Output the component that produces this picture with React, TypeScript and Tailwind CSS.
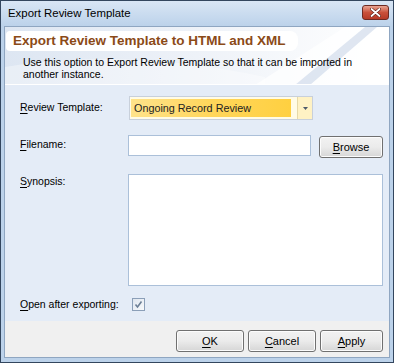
import React from "react";

const font = { fontFamily: '"Liberation Sans", Tahoma, sans-serif' };

function Btn({ label, u, w }: { label: string; u: string; w: string }) {
  const rest = label.slice(u.length);
  return (
    <div
      className={`${w} h-[22px] flex items-center justify-center rounded-[3px] border border-[#707070] text-[11px] text-black bg-gradient-to-b from-[#f2f2f2] via-[#ebebeb] to-[#d6d6d6] shadow-[inset_0_0_0_1px_#fcfcfc]`}
    >
      <span>
        <span className="underline underline-offset-2">{u}</span>
        {rest}
      </span>
    </div>
  );
}

export default function App() {
  return (
    <div
      className="w-[394px] h-[363px] bg-[#bcd2ea] border border-[#33465e] flex flex-col overflow-hidden"
      style={font}
    >
      {/* Title bar */}
      <div className="h-[25px] flex items-center justify-between pl-[7px] pr-[4px] bg-gradient-to-b from-[#d9e6f5] to-[#bcd2ea]">
        <span className="text-[11.4px] text-black">Export Review Template</span>
        <div className="w-[27px] h-[15px] mb-[3px] rounded-[3px] border border-[#6d2a22] bg-gradient-to-b from-[#e8a493] via-[#c9503a] to-[#b63a26] flex items-center justify-center">
          <svg width="11" height="9" viewBox="0 0 11 9">
            <path d="M1.5 1 L9.5 8 M9.5 1 L1.5 8" stroke="#5a1a12" strokeWidth="3" strokeLinecap="round" />
            <path d="M1.5 1 L9.5 8 M9.5 1 L1.5 8" stroke="#ffffff" strokeWidth="1.8" strokeLinecap="round" />
          </svg>
        </div>
      </div>

      {/* Client area */}
      <div className="flex-1 mx-[3px] mb-[4px] border border-[#8fa6c1] flex flex-col bg-[#e4ecf7]">
        {/* Header band */}
        <div className="relative h-[58px] bg-gradient-to-r from-[#dde6f2] via-[#eef2f8] to-[#ffffff] overflow-hidden border-b border-[#ffffff]">
          <svg className="absolute inset-0" width="386" height="58" viewBox="0 0 386 58">
            <path d="M250 58 L340 0 L386 0 L386 58 Z" fill="#ffffff" opacity="0.7" />
            <path d="M290 58 L360 0 L372 0 L305 58 Z" fill="#c9d6e8" opacity="0.6" />
            <path d="M0 40 Q120 20 260 50 L260 58 L0 58 Z" fill="#ffffff" opacity="0.35" />
          </svg>
          <div className="relative pt-[1px] pl-[1px]">
            <div className="inline-block bg-white rounded-r-[8px] rounded-l-[4px] pl-[7px] pr-[12px] h-[20px] leading-[20px] text-[13.5px] font-bold text-[#8b4a17]">
              Export Review Template to HTML and XML
            </div>
            <div className="pl-[17px] pr-[20px] mt-[4px] text-[10.5px] leading-[12px] text-black">
              Use this option to Export Review Template so that it can be imported in another instance.
            </div>
          </div>
        </div>

        {/* Form */}
        <div className="flex-1 flex flex-col pl-[15px] pr-[6px] text-[10.5px] text-black">
          <div className="flex items-center mt-[11px] h-[24px]">
            <span className="w-[109px]">
              <span className="underline underline-offset-2">R</span>eview Template:
            </span>
            <div className="w-[184px] h-[24px] flex border border-[#c8d0db] bg-[#fffbe6]">
              <div className="flex-1 flex items-center pl-[1px]">
                <div className="h-[18px] w-[160px] flex items-center pl-[3px] bg-gradient-to-r from-[#ffe38a] via-[#ffd65a] to-[#ffd040] text-[#222] text-[10.8px]">
                  Ongoing Record Review
                </div>
              </div>
              <div className="w-[15px] border-l border-[#e6d9a8] bg-[#fff2c4] flex items-center justify-center">
                <svg width="5" height="3" viewBox="0 0 5 3">
                  <path d="M0 0 L5 0 L2.5 3 Z" fill="#4d5a6b" />
                </svg>
              </div>
            </div>
          </div>

          <div className="flex items-center mt-[15px] h-[22px]">
            <span className="w-[109px] self-start pt-[2px]">
              <span className="underline underline-offset-2">F</span>ilename:
            </span>
            <div className="w-[184px] h-[21px] self-start border border-[#abc0d9] bg-white" />
            <div className="ml-[8px] mt-[2px]">
              <Btn label="Browse" u="B" w="w-[64px]" />
            </div>
          </div>

          <div className="flex mt-[17px]">
            <span className="w-[109px] pt-[0px]">
              <span className="underline underline-offset-2">S</span>ynopsis:
            </span>
            <div className="w-[257px] h-[112px] border border-[#abc0d9] bg-white" />
          </div>

          <div className="flex items-center mt-[11px]">
            <span className="w-[112px]">
              <span className="underline underline-offset-2">O</span>pen after exporting:
            </span>
            <div className="w-[13px] h-[13px] border border-[#8b9fb8] bg-gradient-to-br from-[#dfe6ef] to-[#f7f9fb] flex items-center justify-center">
              <svg width="9" height="9" viewBox="0 0 9 9">
                <path d="M1.5 4.5 L3.5 7 L7.5 1.5" stroke="#6c7f96" strokeWidth="1.6" fill="none" />
              </svg>
            </div>
          </div>
        </div>

        {/* Button bar */}
        <div className="h-[36px] bg-[#f0f0f0] flex items-start justify-end gap-[4px] pr-[6px] pt-[9px]">
          <Btn label="OK" u="O" w="w-[68px]" />
          <Btn label="Cancel" u="C" w="w-[68px]" />
          <Btn label="Apply" u="A" w="w-[63px]" />
        </div>
      </div>
    </div>
  );
}
